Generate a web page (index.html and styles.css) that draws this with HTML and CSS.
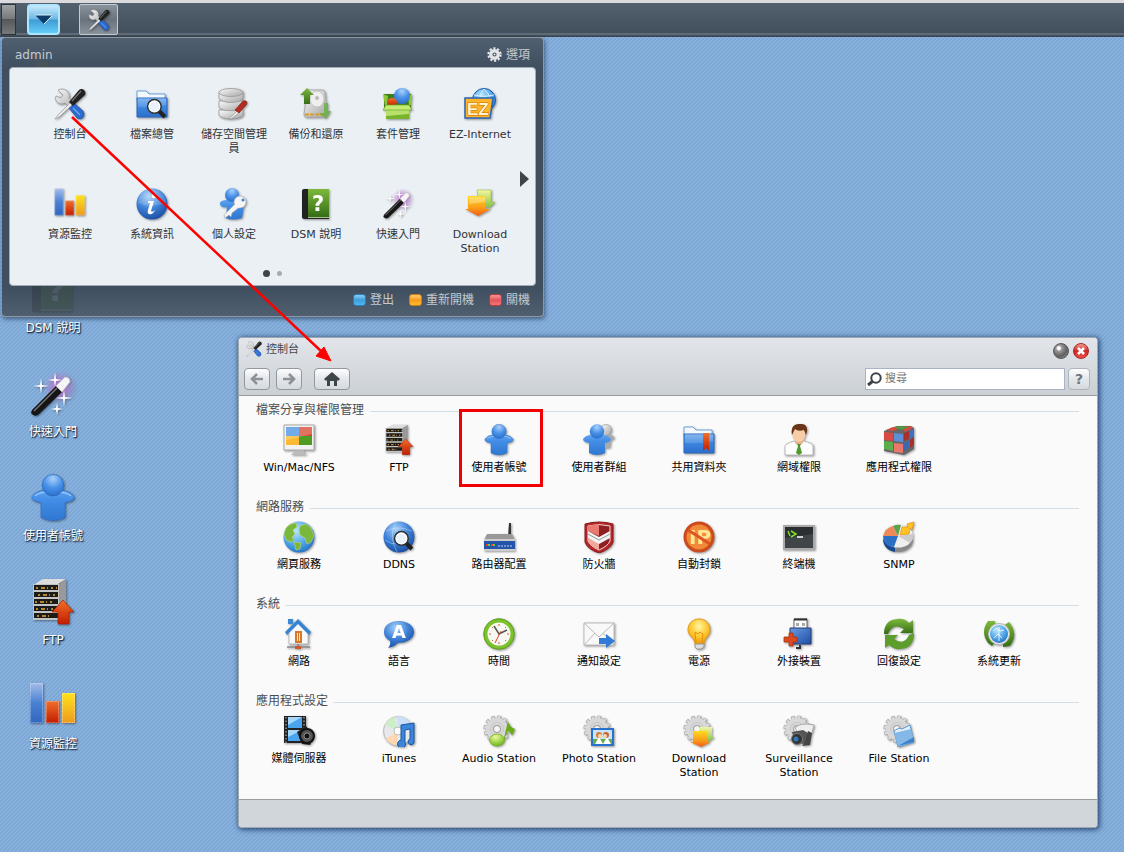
FILE: index.html
```html
<!DOCTYPE html>
<html lang="zh-Hant">
<head>
<meta charset="utf-8">
<title>DSM - 控制台</title>
<link rel="stylesheet" href="styles.css">
</head>
<body>
<svg class="sprite" aria-hidden="true">
  <defs>
    <linearGradient id="gBlue" x1="0" y1="0" x2="0" y2="1"><stop offset="0" stop-color="#6fabee"/><stop offset=".45" stop-color="#3c86e0"/><stop offset="1" stop-color="#2c6fcb"/></linearGradient>
    <linearGradient id="gNavy" x1="0" y1="0" x2="1" y2="1"><stop offset="0" stop-color="#6a9be0"/><stop offset="1" stop-color="#1c4da6"/></linearGradient>
    <linearGradient id="gBar" x1="0" y1="0" x2="0" y2="1"><stop offset="0" stop-color="#a3bde8"/><stop offset=".5" stop-color="#4a80d2"/><stop offset="1" stop-color="#3166bf"/></linearGradient>
    <linearGradient id="gBody" x1="0" y1="0" x2="0" y2="1"><stop offset="0" stop-color="#5fa4f0"/><stop offset=".3" stop-color="#438ee6"/><stop offset="1" stop-color="#2f76d0"/></linearGradient>
    <radialGradient id="rHead" cx=".5" cy=".2" r=".8"><stop offset="0" stop-color="#a9d0fb"/><stop offset=".55" stop-color="#4790e8"/><stop offset="1" stop-color="#2b6fca"/></radialGradient>
    <linearGradient id="gGrey" x1="0" y1="0" x2="1" y2="1"><stop offset="0" stop-color="#fbfbfb"/><stop offset="1" stop-color="#a5a5a5"/></linearGradient>
    <linearGradient id="gRed" x1="0" y1="0" x2="0" y2="1"><stop offset="0" stop-color="#f0702a"/><stop offset="1" stop-color="#c31c00"/></linearGradient>
    <linearGradient id="gYel" x1="0" y1="0" x2="0" y2="1"><stop offset="0" stop-color="#ffe21c"/><stop offset="1" stop-color="#ee9a1e"/></linearGradient>
    <linearGradient id="gOra" x1="0" y1="0" x2="0" y2="1"><stop offset="0" stop-color="#ffd91e"/><stop offset=".6" stop-color="#fb9a1b"/><stop offset="1" stop-color="#ee5f14"/></linearGradient>
    <linearGradient id="gGreen" x1="0" y1="0" x2="0" y2="1"><stop offset="0" stop-color="#7db93c"/><stop offset="1" stop-color="#356d16"/></linearGradient>
    <linearGradient id="gLime" x1="0" y1="0" x2="0" y2="1"><stop offset="0" stop-color="#f7f5a0"/><stop offset="1" stop-color="#7cc142"/></linearGradient>
    <radialGradient id="rBlue" cx=".4" cy=".25" r=".8"><stop offset="0" stop-color="#a8d2fa"/><stop offset=".5" stop-color="#3f83d8"/><stop offset="1" stop-color="#164a9e"/></radialGradient>
    <radialGradient id="rGlobe" cx=".4" cy=".3" r=".8"><stop offset="0" stop-color="#b9e6fb"/><stop offset=".6" stop-color="#4aa0e6"/><stop offset="1" stop-color="#1a66bc"/></radialGradient>
    <radialGradient id="rYel" cx=".5" cy=".3" r=".7"><stop offset="0" stop-color="#fff7a0"/><stop offset=".6" stop-color="#fdc42a"/><stop offset="1" stop-color="#ee9310"/></radialGradient>
    <radialGradient id="rGlow"><stop offset="0" stop-color="#d96be8" stop-opacity=".9"/><stop offset="1" stop-color="#d9a0f0" stop-opacity="0"/></radialGradient>
    <radialGradient id="rLime" cx=".4" cy=".25" r=".8"><stop offset="0" stop-color="#ecfa9a"/><stop offset="1" stop-color="#68b414"/></radialGradient>
  </defs>

  <symbol id="tools" viewBox="0 0 32 32">
    <path d="M4 2 9 7 7 10 2 8C0 13 5 18 11 15L17 21 22 17 15 10C17 4 10-1 4 2Z" fill="url(#gGrey)" stroke="#999" stroke-width=".8"/>
    <path d="M15 20 20 15 29 23C32 28 28 33 23 30Z" fill="#2b6bd0" stroke="#1c4a9c" stroke-width=".7"/>
    <path d="M19 20 26 27" stroke="#6ba4ee" stroke-width="1.4"/>
    <path d="M17 14 4 27 1 31 5 29 18 17Z" fill="#eee" stroke="#999" stroke-width=".7"/>
    <path d="M15 14 25 2C28-1 33 3 31 7L19 18Z" fill="#222"/><path d="M18 13 27 3" stroke="#777" stroke-width="1.3"/>
  </symbol>

  <symbol id="folderbase" viewBox="0 0 32 32">
    <path d="M1 3H10L13 6H29V12H1Z" fill="#f4f8fd" stroke="#6aa2dc"/>
    <path d="M1 10H31V29H1Z" fill="url(#gBlue)" stroke="#2b68bd"/><path d="M2 10H30V17Q16 20 2 19Z" fill="#fff" opacity=".15"/>
  </symbol>
  <symbol id="lens" viewBox="0 0 20 20"><path d="m12 12 6 6" stroke="#222" stroke-width="4"/><circle cx="8" cy="8" r="6.500" fill="#e9f2fa" stroke="#333" stroke-width="1.500"/><circle cx="8" cy="8" r="5" fill="none" stroke="#fff"/></symbol>
  <symbol id="fsearch" viewBox="0 0 32 32"><use href="#folderbase" width="32" height="32"/><use href="#lens" x="10" y="10" width="21" height="21"/></symbol>
  <symbol id="fshare" viewBox="0 0 32 32"><use href="#folderbase" width="32" height="32"/><path d="M20 9H26V27L23 24 20 27Z" fill="url(#gRed)"/></symbol>
  <symbol id="tanfolder" viewBox="0 0 48 48"><path d="M6 4H18L22 8H47V44H6Z" fill="#d8b98a"/></symbol>

  <symbol id="db" viewBox="0 0 32 32">
    <g fill="url(#gGrey)" stroke="#999" stroke-width=".8"><path d="M1 22V27C3 32 23 32 25 27V22Z"/><path d="M1 13V19C3 24 23 24 25 19V13Z"/><path d="M1 4V10C3 16 23 16 25 10V4Z"/><ellipse cx="13" cy="4.500" rx="12" ry="4"/></g>
    <path d="m11 31 9-9 2 2-9 7Z" fill="#eee" stroke="#888" stroke-width=".6"/><path d="m17 22 8-9c4-1 5 2 3 4l-7 8Z" fill="#b32c20" stroke="#7d1710" stroke-width=".6"/>
  </symbol>

  <symbol id="backup" viewBox="0 0 32 32">
    <path d="M9 2H22Q25 2 25 5L27 26Q27 29 24 29H6Q4 29 4 26L7 4Q7 2 9 2Z" fill="url(#gGrey)" stroke="#aaa"/><ellipse cx="17" cy="11" rx="7" ry="8" fill="#efefef" stroke="#c4c4c4"/><circle cx="17" cy="10" r="2" fill="#bbb"/><path d="M5 26.500H26" stroke="#d79a26" stroke-width="2" stroke-dasharray="4 1"/>
    <path d="M7 0 14 7H10V16H4V7H0Z" fill="url(#gGreen)"/><path d="M24 15H28V23H31L26 31 19 25H24Z" fill="#6fb04a" opacity=".9"/>
  </symbol>

  <symbol id="package" viewBox="0 0 32 32">
    <path d="M2 6H29V20H2Z" fill="#3f7d1d"/><path d="M1 6 6 8 5 17H3ZM30 6 26 8 27 17H29Z" fill="#8cc63a"/>
    <circle cx="20" cy="8" r="8" fill="url(#rHead)"/><ellipse cx="10" cy="14" rx="5" ry="4" fill="url(#gRed)"/>
    <path d="M4 21H27V31H4Z" fill="#76b52c"/><path d="M4 22H27V26L4 28Z" fill="#c9ec7c" opacity=".8"/>
    <path d="M4 17H27L30 22H1Z" fill="#c5ec70" stroke="#6aa82c" stroke-width=".7"/>
  </symbol>

  <symbol id="globeback" viewBox="0 0 32 32">
    <circle cx="20" cy="12" r="11.500" fill="url(#rGlobe)" stroke="#1c5cac"/><path d="M10 7Q20 10 30 7M20 1Q14 8 17 14M20 1Q28 8 27 18" stroke="#d4edff" fill="none"/>
    <path d="M1 10H29L26 30H1Z" fill="#ffb52b" stroke="#2a64b5" stroke-width="1.5"/>
  </symbol>

  <symbol id="bars" viewBox="0 0 48 48">
    <path d="M1 1H14V41H1Z" fill="url(#gBar)"/><path d="M17 19H30V41H17Z" fill="url(#gRed)"/><path d="M33 11H46V41H33Z" fill="url(#gYel)"/>
    <path d="M1.500 1.500H13.500V40.500H1.500ZM17.500 19.500H29.500V40.500H17.500ZM33.500 11.500H45.500V40.500H33.500Z" fill="none" stroke="#fff" stroke-opacity=".25"/>
  </symbol>

  <symbol id="info" viewBox="0 0 32 32">
    <circle cx="16" cy="16" r="15.500" fill="url(#rBlue)"/><path d="M2 15A14 14 0 0 1 30 15Q16 21 2 15Z" fill="#fff" opacity=".15"/><circle cx="18" cy="8" r="2.300" fill="#fff"/><path d="M12 13H18L15 23Q16 25 19 22Q17 27 13 26 11 25 12 22L14 15H12Z" fill="#fff"/>
  </symbol>

  <symbol id="user" viewBox="0 0 32 32">
    <path d="M2 15Q5 11 10 11H22Q27 11 30 15 31 18 24 19V29Q16 33 8 29V19Q1 18 2 15Z" fill="url(#gBody)" stroke="#2f72c8" stroke-width=".5"/>
    <path d="M4 14.500Q9 11.500 12 12.500M28 14.500Q23 11.500 20 12.500" stroke="#9cc8fa" stroke-width=".8" fill="none"/>
    <circle cx="16" cy="7.500" r="7.200" fill="url(#rHead)" stroke="#2a69bd" stroke-width=".4"/>
  </symbol>
  <symbol id="usercfg" viewBox="0 0 32 32">
    <path d="M2 16Q1 13 8 12H20Q27 13 26 18L24 30Q14 33 8 30L9 19Q3 20 2 16Z" fill="url(#gBody)"/><circle cx="14" cy="7" r="7" fill="url(#rHead)"/>
    <circle cx="22" cy="14" r="6" fill="#f5f5f5" stroke="#aaa" stroke-width=".6"/><circle cx="25" cy="12" r="1.500" fill="#3c82dd"/><path d="M17 16 6 27 7 30 11 27 13 29 14 25 22 19Z" fill="#f5f5f5"/><path d="M17 16 6 27 7 30 11 27 13 29 14 25 20 20" fill="none" stroke="#aaa" stroke-width=".6"/>
  </symbol>
  <symbol id="group" viewBox="0 0 32 32">
    <path d="M15 12 25 10Q33 12 31 15L28 16 27 24H18Z" fill="#aaa"/><circle cx="23" cy="6" r="5.500" fill="url(#gGrey)" stroke="#999" stroke-width=".6"/>
    <path d="M0 15Q3 11 8 11H20Q25 11 28 15 28 18 22 19V29Q14 33 6 29V19Q0 18 0 15Z" fill="url(#gBody)"/><circle cx="14" cy="7.500" r="7.200" fill="url(#rHead)"/>
  </symbol>

  <symbol id="bookbase" viewBox="0 0 32 32">
    <path d="M2 3Q2 1 4 1H29V31H4Q2 31 2 29Z" fill="#222"/><path d="M8 1H29V29H8Z" fill="url(#gGreen)"/><path d="M8 29H29V30H8Z" fill="#a9c090"/>
  </symbol>

  <symbol id="wand" viewBox="0 0 48 48">
    <circle cx="31" cy="17" r="17" fill="url(#rGlow)"/>
    <path d="M12 8 13 15 20 16 13 17 12 24 11 17 4 16 11 15ZM26 2 27 9 33 10 27 11 26 17 25 11 19 10 25 9ZM35 20 36 27 44 28 36 29 35 37 34 29 26 28 34 27ZM28 33 29 38 34 39 29 40 28 45 27 40 22 39 27 38Z" fill="#fff"/>
    <path d="M3 40 27 16 33 22 9 45Q5 47 2 43Z" fill="#161616"/><path d="M5 41 28 18" stroke="#777" stroke-width="1.500"/><path d="m27 16 9-9q5 0 5 5l-8 10Z" fill="#f5f5f5" stroke="#bbb" stroke-width=".6"/>
  </symbol>

  <symbol id="download" viewBox="0 0 32 32">
    <path d="M13 2H27V14H31L25 20 15 14Z" fill="url(#gLime)" stroke="#9ac24b" stroke-width=".6"/><path d="M4 8H22V21H27L14 28 1 21H4Z" fill="url(#gOra)"/><path d="M5 9H21V14L5 16Z" fill="#fff" opacity=".3"/>
  </symbol>

  <symbol id="monitor" viewBox="0 0 32 32">
    <path d="M11 25H21V28L24 31H8L11 28Z" fill="#bbb"/><path d="M1 1H31V26H1Z" fill="#f2f2f2" stroke="#aaa"/><path d="M3 3H16V12H3Z" fill="#4c92e2"/><path d="M16 3H29V12H16Z" fill="#d64b35"/><path d="M3 12H16V21H3Z" fill="#fdb934"/><path d="M16 12H29V21H16Z" fill="#4f9b26"/><path d="M3 3H29V10Q15 13 3 16Z" fill="#fff" opacity=".22"/>
  </symbol>

  <symbol id="ftp" viewBox="0 0 48 48">
    <path d="M4 7 14 1H37L29 6V42H4Z" fill="#ddd"/><path d="M29 7 37 1V36L29 43Z" fill="#999"/><path d="M4 6H30V42H4Z" fill="#c4c4c4"/><path d="M5 7H29V12H5ZM5 14H29V19H5ZM5 21H29V26H5ZM5 28H29V33H5ZM5 35H29V40H5Z" fill="#1c1c1a"/>
    <path d="M7 10H28M9 17H28M6 24H25M7 31H26M8 38H22" stroke="#b8862a" stroke-width="1.800" stroke-dasharray="2 3 4 2 1 3"/>
    <path d="M34 22 45 34H40V46H29V34H23Z" fill="url(#gRed)" stroke="#a81e00" stroke-width=".7"/>
  </symbol>

  <symbol id="man" viewBox="0 0 32 32">
    <path d="M2 31V22Q3 19 12 17H20Q30 19 30 22V31Z" fill="#fdfdfd" stroke="#bbb"/><path d="M12 15H20V19L16 22 12 19Z" fill="#e8b088"/><path d="M14 20H18L17 22 19 29 16 31 13 29 15 22Z" fill="#4c9a2a"/><ellipse cx="16" cy="10" rx="6.500" ry="8" fill="#f7cda8"/><path d="M9 11Q7 1 15 0 25-1 24 7L23 11 21 6Q15 8 12 5Z" fill="#6b3517"/>
  </symbol>

  <symbol id="cube" viewBox="0 0 32 32">
    <path d="M1 7 14 2H28L31 4V25L21 31 1 27Z" fill="#666"/>
    <path d="M3 6 10 3 17 4 10 7ZM19 3 27 2 30 4 22 8Z" fill="#d84a40"/><path d="M11 3 17 2 26 3 18 6Z" fill="#4d9b42"/><path d="M1 8 10 9V17L1 16Z" fill="#d94b42"/><path d="M11 9 20 10V18L11 17Z" fill="#5b8fd8"/><path d="M1 17 10 18V27L1 25Z" fill="#5cae4c"/><path d="M11 19 20 20V29L11 28Z" fill="#ea766c"/><path d="M21 9 26 7V15L21 17Z" fill="#a92f2c"/><path d="M21 19 26 16V24L21 27Z" fill="#3c68ae"/><path d="M27 16 31 13V21L27 24Z" fill="#a92f2c"/><path d="M27 7 31 5V12L27 15Z" fill="#3e72c0"/>
  </symbol>

  <symbol id="globe" viewBox="0 0 32 32"><circle cx="16" cy="16" r="15.500" fill="url(#rGlobe)"/><path d="M3 7Q7 2 13 2L14 6 10 9 12 13 9 16 11 19 8 21 3 19 1 13ZM17 5 23 3 28 7 31 15 28 21 24 23 22 17 17 14 16 9ZM11 21 18 22 17 28 13 29Z" fill="#7bb73a" stroke="#c5e08a" stroke-width=".5"/></symbol>
  <symbol id="ddns" viewBox="0 0 32 32"><circle cx="16" cy="16" r="15.500" fill="url(#rBlue)"/><path d="M3 10Q15 4 29 10M2 19Q8 24 16 23M13 1Q5 15 14 31" stroke="#d9eafc" stroke-opacity=".4" fill="none"/><use href="#lens" x="10" y="9" width="21" height="21"/></symbol>

  <symbol id="router" viewBox="0 0 32 32"><path d="M26 2H28V16H25Z" fill="#333"/><path d="M4 13H29L32 19H1Z" fill="#999"/><path d="M1 19H32V29H1Z" fill="#2455a8"/><path d="M1 28H32V30H1ZM1 18H32V20H1Z" fill="#ccc"/><path d="M3 24H5M8 24H10" stroke="#f33" stroke-width="2"/><path d="M5 24H7M10 24H12" stroke="#5d3" stroke-width="2"/><path d="M15 25H30" stroke="#bcd5f7" stroke-dasharray="2 1"/></symbol>

  <symbol id="firewall" viewBox="0 0 32 32"><path d="M2 3Q16-1 30 3V21Q28 28 16 32 4 28 2 21Z" fill="#b6252a" stroke="#87191d"/><path d="M5 5Q16 2 27 5V20Q25 25 16 29 7 25 5 20Z" fill="#8f1f22" stroke="#f3d9d5"/><path d="M16 3V15L5 10V5Z" fill="#e97a70"/><path d="M16 22V29Q7 26 5 20V17Z" fill="#f0a79c"/><path d="M5 10 16 16 27 10V17L16 23 5 17Z" fill="#f2f2f2"/><path d="M5 13 16 19 27 13" fill="none" stroke="#999"/></symbol>

  <symbol id="terminal" viewBox="0 0 32 32"><path d="M1 5H31V28H1Z" fill="#2b2f31" stroke="#aaa" stroke-width="2"/><path d="M2 17 30 13V27H2Z" fill="#555c60" opacity=".5"/><path d="M5 10 7 15M8 10 13 13 8 16" stroke="#81df2d" stroke-width="1.500" fill="none"/><path d="M14 16H20" stroke="#fff" stroke-width="1.500"/></symbol>

  <symbol id="snmp" viewBox="0 0 32 32"><ellipse cx="15" cy="19" rx="15" ry="12" fill="#888"/><path d="M0 16Q0 29 12 31V20Z" fill="#17498f"/><ellipse cx="15" cy="15" rx="15" ry="11.500" fill="#eee"/><path d="M15 15 0 15Q1 25 11 26Z" fill="#2c70c6"/><path d="M15 15 0 15Q2 7 10 5Z" fill="#ee8a5a"/><path d="M15 15 10 5Q14 3 18 4Z" fill="#58a34b"/><path d="M15 15 27 22Q31 18 30 13Z" fill="#ccc"/><path d="M24 3 31 1 29 9 27 7 26 13 17 14 19 6 25 6Z" fill="#ffc323" stroke="#e88c12" stroke-width=".7"/></symbol>

  <symbol id="house" viewBox="0 0 32 32"><path d="M5 1H10V6H5Z" fill="#3e88d3"/><path d="M6 13 15 5 25 13V26H6Z" fill="#f8f8f8" stroke="#bbb"/><path d="M2 14 15 1 28 14 26 17 15 6 4 17Z" fill="#3484d3"/><path d="M12 13H19V25H12Z" fill="#d97824"/><path d="M14 15H15V23H14ZM16 15H17V23H16Z" fill="#ffe5bd"/><path d="M4 29H27M15 26V30" stroke="#888" stroke-width="1.500"/><path d="M12 28H18V31H12Z" fill="#d35432"/></symbol>

  <symbol id="bubble" viewBox="0 0 32 32"><path d="M16 3C25 3 31 8 31 14S25 25 15 25Q11 29 5 30 8 27 7 23 1 20 1 14C1 7 7 3 16 3Z" fill="url(#rBlue)"/></symbol>

  <symbol id="clock" viewBox="0 0 32 32"><circle cx="16" cy="16" r="13.500" fill="#f8f8f2" stroke="#7cc22c" stroke-width="4"/><circle cx="16" cy="16" r="15.300" fill="none" stroke="#4f8f12" stroke-width=".7"/><path d="M16 6V8M16 24V26M6 16H8M24 16H26M9 9 10 10M22 22 23 23M9 23 10 22M22 10 23 9" stroke="#d75b3c"/><path d="M11 8 16 16 24 12" fill="none" stroke="#555" stroke-width="1.500"/><path d="M18 13 12 25" stroke="#e74327"/></symbol>

  <symbol id="mail" viewBox="0 0 32 32"><path d="M1 5H31V27H1Z" fill="#f9f9f9" stroke="#bbb"/><path d="M1 5 16 19 31 5M1 27 12 15M31 27 20 15" fill="none" stroke="#bbb"/><path d="M16 20H23V16L32 23 23 30V26H16Z" fill="#2f7bd5"/></symbol>

  <symbol id="bulb" viewBox="0 0 32 32"><path d="M16 1C23 1 27 6 27 12 27 18 21 20 21 26H12C12 20 5 18 5 12 5 6 9 1 16 1Z" fill="url(#rYel)" stroke="#e69a14"/><path d="M13 25 12 14 15 16 17 14 20 16 19 25" fill="none" stroke="#e4900b"/><path d="M12 26H21V29L18 31H14L12 29Z" fill="#ddd" stroke="#999"/></symbol>

  <symbol id="ext" viewBox="0 0 32 32"><path d="M11 1H24V12H11Z" fill="#fafafa" stroke="#666"/><path d="M11 1.500H24" stroke="#333" stroke-width="2"/><path d="M13 5H16V8H13ZM19 5H22V8H19Z" fill="#aaa"/><path d="M7 10H28V26H7Z" fill="url(#gNavy)" stroke="#273e76"/><path d="M17 27V30H13" stroke="#333" stroke-width="2" fill="none"/><path d="M6 15H10V19H14V24H10V28H6V24H1V19H6Z" fill="#de4a20" stroke="#a52e0d" stroke-width=".7"/></symbol>

  <symbol id="refresh" viewBox="0 0 32 32"><path d="M1 16Q1 2 14 1 21 0 26 5L30 2V15H17L21 11Q10 4 5 16Z" fill="url(#gGreen)"/><path d="M31 15Q31 30 18 31 11 32 6 27L2 30V17H15L11 21Q21 28 26 17Z" fill="#5d9d2c"/></symbol>

  <symbol id="update" viewBox="0 0 32 32"><path d="M12 3 5 3Q-3 14 5 25L9 28 12 24Q4 15 12 7ZM20 29 27 28Q36 16 26 4L20 8Q29 17 20 25Z" fill="url(#gGreen)"/><circle cx="16" cy="16" r="10.500" fill="#eee" stroke="#bbb"/><circle cx="16" cy="16" r="9" fill="url(#rGlobe)"/><path d="M10 13 14 10 17 13 21 12M11 20 15 16 19 20M16 9V23" stroke="#fff" stroke-opacity=".8" fill="none"/></symbol>

  <symbol id="media" viewBox="0 0 32 32"><path d="M1 1H23V28H1Z" fill="#222"/><path d="M5 2H19V13H5ZM5 15H19V26H5Z" fill="#4ba5ee"/><path d="M5 2H19L5 10ZM5 15H19L5 22Z" fill="#a6d8fb"/><path d="M3 2V28M21 2V28" stroke="#ccc" stroke-dasharray="1.500 2"/><path d="M14 17 23 11 31 21 27 30 19 29Z" fill="#222"/><circle cx="24" cy="21" r="7" fill="#555" stroke="#111" stroke-width="2"/><circle cx="24" cy="21" r="3" fill="#111" stroke="#888"/></symbol>

  <symbol id="itunes" viewBox="0 0 32 32"><circle cx="15" cy="16" r="14.500" fill="#e8e8ea" stroke="#bbb"/><path d="M15 16 2 10Q5 3 12 2Z" fill="#cdeecb"/><path d="M15 16 14 1Q23 1 27 8Z" fill="#ccdff8"/><path d="M15 16 3 24Q8 30 14 30Z" fill="#ffd8b1"/><circle cx="15" cy="16" r="4" fill="#fff" stroke="#bbb"/><path d="M18 10 31 8V26A3 3 0 1 1 27 24V14L22 15V27A4 4 0 1 1 18 25Z" fill="#3b86db" stroke="#1c559f"/></symbol>

  <symbol id="gear" viewBox="0 0 32 32"><circle cx="16" cy="16" r="13" fill="none" stroke="#a6a6a6" stroke-width="5" stroke-dasharray="3.900 2.907"/><circle cx="16" cy="16" r="13" fill="none" stroke="#dcdcdc" stroke-width="3.600" stroke-dasharray="2.700 4.107" stroke-dashoffset="-.6"/><circle cx="16" cy="16" r="8.500" fill="none" stroke="#d8d8d8" stroke-width="8"/><circle cx="16" cy="16" r="7.500" fill="none" stroke="#c4c4c4"/><circle cx="16" cy="16" r="4" fill="#f5f5f5" stroke="#999"/></symbol>
  <symbol id="optgear" viewBox="0 0 16 16"><circle cx="8" cy="8" r="6.500" fill="none" stroke="#e3e5e6" stroke-width="2.400" stroke-dasharray="2.300 1.784"/><circle cx="8" cy="8" r="4" fill="none" stroke="#e3e5e6" stroke-width="3.500"/><circle cx="8" cy="8" r="1" fill="#eee"/></symbol>
  <symbol id="audio" viewBox="0 0 32 32"><use href="#gear" width="28" height="28"/><path d="M25 6Q26 12 32 14L29 21Q28 17 25 16L20 27Z" fill="#69ac18"/><ellipse cx="14" cy="25" rx="7.500" ry="6" fill="url(#rLime)" stroke="#70a912" stroke-width=".7"/></symbol>
  <symbol id="photo" viewBox="0 0 32 32"><use href="#gear" width="28" height="28"/><path d="M8 13H31V31H8Z" fill="#2a70cd"/><path d="M10 15H29V29H10Z" fill="#c7e5fa"/><path d="M10 24H29V29H10Z" fill="#65ae47"/><path d="M12 29 16 22 20 29ZM20 29 24 22 28 29Z" fill="#fff"/><circle cx="16" cy="20" r="3" fill="#d87c30"/><circle cx="23" cy="20" r="3" fill="#cb6530"/><circle cx="17" cy="21" r="2" fill="#ffd8ad"/><circle cx="22" cy="21" r="2" fill="#ffd8ad"/></symbol>
  <symbol id="dlst" viewBox="0 0 32 32"><use href="#gear" width="28" height="28"/><path d="M17 12H29V22H32L25 27 17 22Z" fill="url(#gLime)"/><path d="M10 16H24V27H28L18 32 7 27H10Z" fill="url(#gOra)"/></symbol>
  <symbol id="camera" viewBox="0 0 32 32"><use href="#gear" width="28" height="28"/><path d="M12 13Q17 7 31 10L29 18 23 20 15 18Z" fill="#eee" stroke="#aaa"/><path d="M9 17 20 15 25 18 23 29 12 28Z" fill="#555"/><path d="M25 16 29 18 27 30 19 31 22 27Z" fill="#444"/><circle cx="14" cy="24" r="5.500" fill="#333" stroke="#777"/><circle cx="13" cy="24" r="2.500" fill="#2d78b8"/></symbol>
  <symbol id="filest" viewBox="0 0 32 32"><use href="#gear" width="28" height="28"/><path d="M11 16 16 13 19 14 27 10 31 27 15 32Z" fill="#e5f0fb" stroke="#5995d1"/><path d="M11 18 28 14 31 27 15 31Z" fill="#84b8e8"/><path d="M15 31 31 22 31 27Z" fill="#3c80c9"/></symbol>
</svg>

<header class="taskbar">
  <button class="task-edge" aria-label="顯示桌面"></button>
  <button class="task-menu" aria-label="主選單"><svg viewBox="0 0 20 12"><path d="M1 1H18L10 10Z" fill="#0d3b6c"/><path d="M1 1H18M10 10 18 2" stroke="#d6f2ff" stroke-width="1" fill="none"/></svg></button>
  <button class="task-app" aria-label="控制台"><svg class="ico s22"><use href="#tools"/></svg></button>
</header>

<main class="desktop">
  <ul class="shortcuts">
    <li><svg class="s48"><use href="#tanfolder"/></svg></li>
    <li class="third"><svg class="ico s48" viewBox="0 0 32 32"><use href="#bookbase" width="32" height="32"/><text class="mark" x="12" y="23">?</text></svg><span>DSM 說明</span></li>
    <li><svg class="ico s48"><use href="#wand"/></svg><span>快速入門</span></li>
    <li><svg class="ico s48"><use href="#user"/></svg><span>使用者帳號</span></li>
    <li><svg class="ico s48"><use href="#ftp"/></svg><span>FTP</span></li>
    <li><svg class="ico s48"><use href="#bars"/></svg><span>資源監控</span></li>
  </ul>

  <section class="menu">
    <div class="menu-head"><span>admin</span><button class="plain"><svg class="s15"><use href="#optgear"/></svg>選項</button></div>
    <div class="menu-panel">
      <ul class="apps">
        <li><svg class="ico s32"><use href="#tools"/></svg><span>控制台</span></li>
        <li><svg class="ico s32"><use href="#fsearch"/></svg><span>檔案總管</span></li>
        <li><svg class="ico s32"><use href="#db"/></svg><span>儲存空間管理員</span></li>
        <li><svg class="ico s32"><use href="#backup"/></svg><span>備份和還原</span></li>
        <li><svg class="ico s32"><use href="#package"/></svg><span>套件管理</span></li>
        <li><svg class="ico s32" viewBox="0 0 32 32"><use href="#globeback" width="32" height="32"/><text class="ez" x="3" y="27">EZ</text></svg><span>EZ-Internet</span></li>
        <li><svg class="ico s32"><use href="#bars"/></svg><span>資源監控</span></li>
        <li><svg class="ico s32"><use href="#info"/></svg><span>系統資訊</span></li>
        <li><svg class="ico s32"><use href="#usercfg"/></svg><span>個人設定</span></li>
        <li><svg class="ico s32" viewBox="0 0 32 32"><use href="#bookbase" width="32" height="32"/><text class="mark" x="12" y="23">?</text></svg><span>DSM 說明</span></li>
        <li><svg class="ico s32"><use href="#wand"/></svg><span>快速入門</span></li>
        <li><svg class="ico s32"><use href="#download"/></svg><span>Download Station</span></li>
      </ul>
      <button class="next" aria-label="下一頁"></button>
      <div class="dots"><i class="on"></i><i></i></div>
    </div>
    <div class="menu-foot">
      <button class="plain"><i class="chip blue"></i>登出</button>
      <button class="plain"><i class="chip orange"></i>重新開機</button>
      <button class="plain"><i class="chip red"></i>關機</button>
    </div>
  </section>

  <section class="window">
    <header class="win-head">
      <div class="win-title">
        <svg class="s16"><use href="#tools"/></svg><h1>控制台</h1>
        <button class="round min" aria-label="最小化"></button>
        <button class="round close" aria-label="關閉"><svg viewBox="0 0 10 10"><path d="M2 2 8 8M8 2 2 8" stroke="#fff" stroke-width="2.600"/></svg></button>
      </div>
      <div class="toolbar">
        <button class="tool" aria-label="上一頁"><svg class="s16" viewBox="0 0 16 16"><path d="M14 8H3M8 3 3 8 8 13" stroke="#8c9297" stroke-width="2.600" fill="none"/></svg></button>
        <button class="tool" aria-label="下一頁"><svg class="s16" viewBox="0 0 16 16"><path d="M2 8H13M8 3 13 8 8 13" stroke="#8c9297" stroke-width="2.600" fill="none"/></svg></button>
        <button class="tool home" aria-label="首頁"><svg class="s16" viewBox="0 0 16 16"><path d="M8 1 16 8 14 10 13 9V15H10V10H6V15H3V9L2 10 0 8Z" fill="#3d444a"/></svg></button>
        <label class="search"><svg class="s16" viewBox="0 0 16 16"><circle cx="9" cy="7" r="4.700" fill="none" stroke="#3d444a" stroke-width="2"/><path d="m6 10-5 4" stroke="#3d444a" stroke-width="3"/></svg><input type="text" placeholder="搜尋" aria-label="搜尋"></label>
        <button class="help">?</button>
      </div>
    </header>
    <div class="win-body">
      <section class="group">
        <h2>檔案分享與權限管理</h2>
        <ul>
          <li><svg class="ico s32"><use href="#monitor"/></svg><span>Win/Mac/NFS</span></li>
          <li><svg class="ico s32"><use href="#ftp"/></svg><span>FTP</span></li>
          <li class="marked"><svg class="ico s32"><use href="#user"/></svg><span>使用者帳號</span></li>
          <li><svg class="ico s32"><use href="#group"/></svg><span>使用者群組</span></li>
          <li><svg class="ico s32"><use href="#fshare"/></svg><span>共用資料夾</span></li>
          <li><svg class="ico s32"><use href="#man"/></svg><span>網域權限</span></li>
          <li><svg class="ico s32"><use href="#cube"/></svg><span>應用程式權限</span></li>
        </ul>
      </section>
      <section class="group">
        <h2>網路服務</h2>
        <ul>
          <li><svg class="ico s32"><use href="#globe"/></svg><span>網頁服務</span></li>
          <li><svg class="ico s32"><use href="#ddns"/></svg><span>DDNS</span></li>
          <li><svg class="ico s32"><use href="#router"/></svg><span>路由器配置</span></li>
          <li><svg class="ico s32"><use href="#firewall"/></svg><span>防火牆</span></li>
          <li><svg class="ico s32" viewBox="0 0 32 32"><circle cx="16" cy="16" r="14" fill="#f08a38" stroke="#cc4a1e" stroke-width="3"/><text class="ip" x="6" y="23">IP</text><path d="m5 9 22 14" stroke="#dc5426" stroke-width="3"/></svg><span>自動封鎖</span></li>
          <li><svg class="ico s32"><use href="#terminal"/></svg><span>終端機</span></li>
          <li><svg class="ico s32"><use href="#snmp"/></svg><span>SNMP</span></li>
        </ul>
      </section>
      <section class="group">
        <h2>系統</h2>
        <ul>
          <li><svg class="ico s32"><use href="#house"/></svg><span>網路</span></li>
          <li><svg class="ico s32" viewBox="0 0 32 32"><use href="#bubble" width="32" height="32"/><text class="letter" x="9" y="20">A</text></svg><span>語言</span></li>
          <li><svg class="ico s32"><use href="#clock"/></svg><span>時間</span></li>
          <li><svg class="ico s32"><use href="#mail"/></svg><span>通知設定</span></li>
          <li><svg class="ico s32"><use href="#bulb"/></svg><span>電源</span></li>
          <li><svg class="ico s32"><use href="#ext"/></svg><span>外接裝置</span></li>
          <li><svg class="ico s32"><use href="#refresh"/></svg><span>回復設定</span></li>
          <li><svg class="ico s32"><use href="#update"/></svg><span>系統更新</span></li>
        </ul>
      </section>
      <section class="group">
        <h2>應用程式設定</h2>
        <ul>
          <li><svg class="ico s32"><use href="#media"/></svg><span>媒體伺服器</span></li>
          <li><svg class="ico s32"><use href="#itunes"/></svg><span>iTunes</span></li>
          <li><svg class="ico s32"><use href="#audio"/></svg><span>Audio Station</span></li>
          <li><svg class="ico s32"><use href="#photo"/></svg><span>Photo Station</span></li>
          <li><svg class="ico s32"><use href="#dlst"/></svg><span>Download Station</span></li>
          <li><svg class="ico s32"><use href="#camera"/></svg><span>Surveillance Station</span></li>
          <li><svg class="ico s32"><use href="#filest"/></svg><span>File Station</span></li>
        </ul>
      </section>
    </div>
    <footer class="win-foot"></footer>
  </section>
</main>

<svg class="pointer" viewBox="0 0 340 370" aria-hidden="true"><path d="M72 117 322 352" stroke="#f00" stroke-width="2.500"/><path d="M331 361 316 356 324 347Z" fill="#f00" stroke="#f00"/></svg>
</body>
</html>
```

FILE: styles.css
```css
*, *::before, *::after { box-sizing: border-box; }
body {
  margin: 0;
  min-height: 100vh;
  display: flex;
  flex-direction: column;
  font: 11px/14px "DejaVu Sans", "Noto Sans CJK TC", sans-serif;
  color: #000;
  background:
    linear-gradient(135deg, #8fb6df 12%, transparent 13% 38%, #8fb6df 39% 62%, transparent 63% 88%, #8fb6df 89%) 0 0 / 4px 4px,
    #7ba6d5;
}
ul { margin: 0; padding: 0; list-style: none; }
h1, h2 { margin: 0; font-weight: normal; }
button { padding: 0; font: inherit; cursor: pointer; }
svg { display: block; flex: none; }
.sprite { position: absolute; width: 0; height: 0; }
.ico { filter: drop-shadow(1px 1px 1px rgba(0, 0, 0, .4)); }
.s15 { width: 15px; height: 15px; }
.s16 { width: 16px; height: 16px; }
.s22 { width: 22px; height: 22px; }
.s32 { width: 32px; height: 32px; }
.s48 { width: 48px; height: 48px; }

/* Lettering on icons */
.mark { font: bold 21px "DejaVu Sans", sans-serif; fill: #fff; text-shadow: none; }
.letter { font: bold 18px "DejaVu Sans", sans-serif; fill: #fff; }
.ez { font: bold 17px "Liberation Sans", sans-serif; fill: #fff4cc; stroke: #c86a00; stroke-width: 1px; paint-order: stroke; }
.ip { font: bold 20px "DejaVu Sans", sans-serif; fill: #ffe690; }

/* Task bar */
.taskbar {
  display: flex;
  height: 37px;
  padding: 1px 1px 0;
  border-top: 3px solid #dcdadd;
  border-bottom: 1px solid #3a4651;
  background: linear-gradient(#53616f, #424f5c 30px, #7c8894 31px, #424f5c 32px);
}
.taskbar button {
  height: 31px;
  display: flex;
  align-items: center;
  justify-content: center;
}
.task-edge {
  width: 15px;
  border: 1px solid #2b333a;
  background: linear-gradient(#a0a2a4, #77797b 48%, #55585a 50%, #77797b);
}
.task-menu {
  width: 33px;
  margin-left: 11px;
  border: 2px solid #aee6ff;
  border-radius: 4px;
  background: linear-gradient(#c5e8fa, #6db8e4 48%, #3f9bd4 52%, #62cdf8);
}
.task-menu svg { width: 20px; height: 12px; }
.task-app {
  width: 39px;
  margin-left: 19px;
  border: 1px solid #c5cad0;
  border-radius: 2px;
  background: linear-gradient(#8a939c, #69737e 50%, #8a939c);
}

/* Desktop shortcuts */
.desktop { position: relative; flex: 1; }
.shortcuts { width: 106px; padding-top: 21px; }
.shortcuts li {
  display: flex;
  flex-direction: column;
  align-items: center;
  gap: 7px;
  height: 104px;
  font-size: 12px;
  color: #fff;
  text-shadow: 1px 1px 1px #16293d, 1px 1px 2px #33506e;
}
.shortcuts .third { margin-top: 104px; }

/* Main menu */
.menu {
  position: absolute;
  top: 0;
  left: 1px;
  width: 543px;
  padding: 0 7px;
  border: 1px solid #8d979f;
  border-radius: 4px;
  background: linear-gradient(rgba(74, 87, 101, .9), rgba(56, 69, 82, .9) 30px, rgba(56, 69, 82, .9) 250px, rgba(74, 87, 101, .9));
  box-shadow: 1px 2px 4px rgba(20, 40, 70, .6);
  color: #c3cad0;
  font-size: 12px;
}
.menu-head, .menu-foot { display: flex; align-items: center; padding: 0 6px; }
.menu-head { height: 29px; justify-content: space-between; padding-top: 4px; }
.menu-foot { height: 30px; justify-content: flex-end; gap: 15px; padding-bottom: 2px; }
.plain {
  display: flex;
  align-items: center;
  gap: 4px;
  border: 0;
  background: none;
  color: inherit;
}
.chip { width: 13px; height: 12px; border-radius: 3px; }
.blue { border: 1px solid #277fc0; background: linear-gradient(#8fcdf5, #3a9ee0 50%, #57b5ee); }
.orange { border: 1px solid #d57d0d; background: linear-gradient(#ffce72, #f79a17 50%, #ffbd35); }
.red { border: 1px solid #c4383f; background: linear-gradient(#f79a9a, #e5545a 50%, #f0777a); }
.menu-panel {
  position: relative;
  padding: 20px 19px 8px;
  border: 1px solid #a4adb5;
  border-radius: 4px;
  background: #ebf0f5;
  color: #303438;
  font-size: 11px;
}
.apps { display: grid; grid-template-columns: repeat(6, 82px); grid-auto-rows: 82px; row-gap: 18px; }
.apps li, .group li {
  display: flex;
  flex-direction: column;
  align-items: center;
  text-align: center;
}
.apps li { gap: 8px; padding: 0 5px; }
.next {
  position: absolute;
  right: 6px;
  top: 103px;
  width: 9px;
  height: 16px;
  border: 0;
  background: #3e4449;
  clip-path: polygon(0 0, 100% 50%, 0 100%);
}
.dots { display: flex; justify-content: center; align-items: center; gap: 7px; }
.dots i { width: 5px; height: 5px; border-radius: 50%; background: #a5abb0; }
.dots .on { width: 7px; height: 7px; background: #3e4449; }

/* Control panel window */
.window {
  position: absolute;
  top: 300px;
  left: 238px;
  right: 26px;
  border: 1px solid #a0a8af;
  border-radius: 4px;
  background: #fafafa;
  box-shadow: 1px 1px 5px 1px rgba(20, 50, 95, .75);
}
.win-head {
  height: 58px;
  padding: 0 7px 0 5px;
  border-bottom: 1px solid #999da1;
  border-radius: 3px 3px 0 0;
  background: linear-gradient(#e2e6ea, #cbd0d5);
}
.win-title { display: flex; align-items: center; gap: 4px; height: 26px; padding: 0 1px 0 2px; }
.win-title h1 { flex: 1; font-size: 11px; line-height: 14px; color: #44494e; padding-bottom: 2px; }
.win-title > svg { margin-bottom: 4px; }
.round {
  width: 16px;
  height: 16px;
  border-radius: 50%;
  display: flex;
  align-items: center;
  justify-content: center;
}
.min { border: 1px solid #555; background: radial-gradient(circle at 35% 30%, #fff 10%, #9a9a9a 22%, #606060 60%, #aaa); }
.close { border: 1px solid #a72323; background: linear-gradient(#f29b91, #ce2626 50%, #ef5148); }
.close svg { width: 10px; height: 10px; }
.toolbar { display: flex; align-items: center; gap: 6px; margin-top: 4px; }
.tool, .help {
  height: 22px;
  border: 1px solid #92989e;
  border-radius: 4px;
  background: linear-gradient(#fdfdfe, #e3e7eb 50%, #d6dbe0);
  display: flex;
  align-items: center;
  justify-content: center;
}
.tool { width: 26px; }
.home { width: 36px; margin-left: 6px; }
.help { width: 22px; margin-left: -3px; border-color: #aeb4ba; font-size: 14px; font-weight: bold; color: #6e757b; }
.search {
  display: flex;
  align-items: center;
  gap: 2px;
  width: 200px;
  height: 22px;
  margin-left: auto;
  padding-left: 1px;
  border: 1px solid #a9b3c3;
  background: #fff;
}
.search input { flex: 1; min-width: 0; padding: 0; border: 0; outline: 0; background: none; font: inherit; }
.search input::placeholder { color: #777; opacity: 1; }
.win-body { padding: 6px 10px 9px; }
.group { min-height: 97px; }
.group h2 {
  display: flex;
  align-items: center;
  gap: 6px;
  padding: 0 8px 0 7px;
  font-size: 12px;
  line-height: 16px;
  color: #4a4e52;
}
.group h2::after { content: ""; flex: 1; height: 1px; margin-top: 3px; background: #d3dde6; }
.group ul { display: grid; grid-template-columns: repeat(auto-fill, 100px); padding-top: 6px; }
.group li { position: relative; gap: 5px; min-height: 64px; padding: 0 10px; }
.marked::after {
  content: "";
  position: absolute;
  top: -15px;
  left: 10px;
  width: 84px;
  height: 78px;
  border: 3px solid #f00000;
}
.win-foot { height: 28px; border-top: 1px solid #989ea2; border-radius: 0 0 3px 3px; background: #d1d6da; }

.pointer { position: absolute; top: 0; left: 0; width: 340px; height: 370px; pointer-events: none; }
```
